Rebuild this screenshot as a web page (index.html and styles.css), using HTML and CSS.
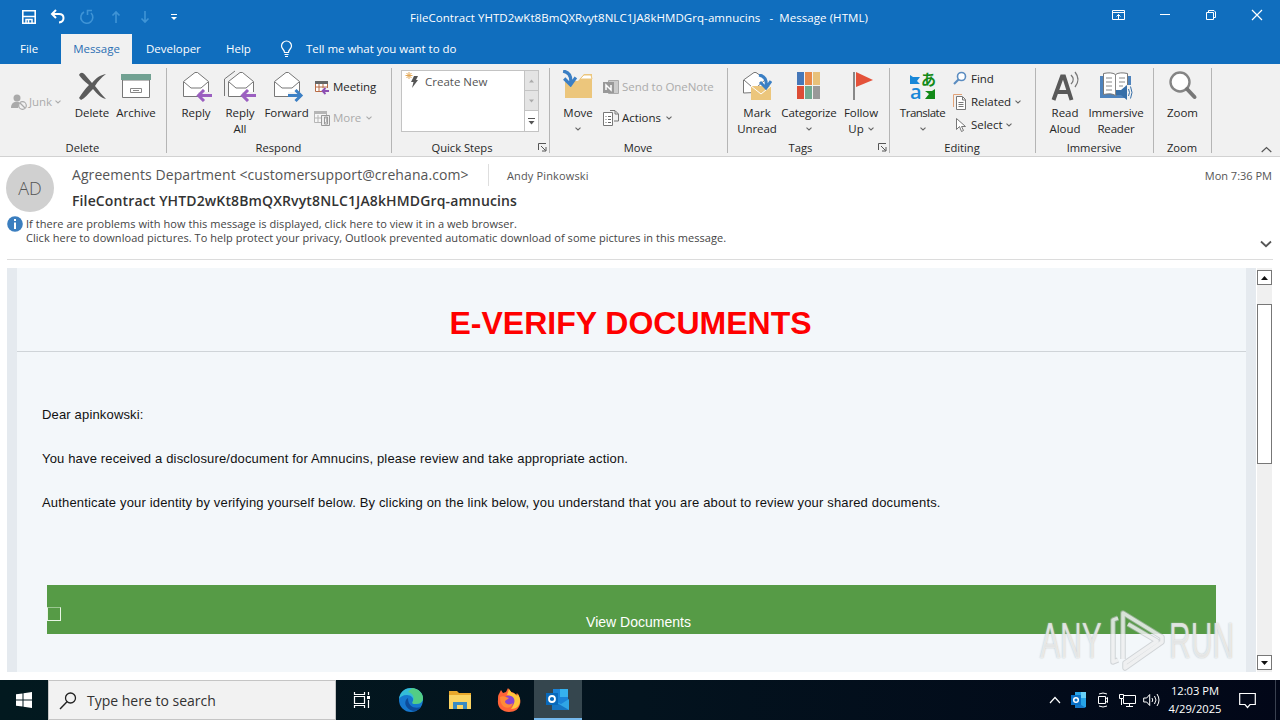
FILE: index.html
```html
<!DOCTYPE html>
<html lang="en">

<head>
    <meta charset="UTF-8">
    <meta name="viewport" content="width=device-width, initial-scale=1.0">
    <title>FileContract - Message (HTML)</title>
    <link rel="stylesheet" href="styles.css">
</head>

<body>

    <!-- Shared shapes -->
    <svg class="defs">
        <symbol id="chev" viewBox="0 0 6 4"><path d="M.5.7L3 3 5.500.7" fill="none" stroke="currentColor" stroke-width="1.100"/></symbol>
        <symbol id="launch" viewBox="0 0 9 9"><path d="M.5 7V.5H8M3 3l4.500 4.500M8 4v4H4" fill="none" stroke="#555"/></symbol>
        <symbol id="envelope" viewBox="0 0 32 32"><path d="M3.500 11.500L15 2.500h2.500l11 9v15h-25z" fill="#fff" stroke="#777"/><path d="M4 12l7 6h10l7-6" fill="none" stroke="#777"/></symbol>
        <symbol id="arrow-left" viewBox="0 0 16 13"><path d="M8 1L2.500 6.500 8 12M3 6.500h13" fill="none" stroke="#9b5fc0" stroke-width="3"/></symbol>
        <symbol id="arrow-down" viewBox="0 0 14 16"><path d="M1 1c6 1 8 5 7 12M2 8l6 6 5-7" fill="none" stroke="#3b7fc4" stroke-width="3"/></symbol>
    </svg>

    <header class="titlebar">
        <div class="quick-access">
            <svg width="16" height="16" viewBox="0 0 16 16"><path d="M1.800 1.800h12.400v12.400H1.800z" fill="none" stroke="#fff" stroke-width="1.600"/><path d="M2 7.500h12M5 14v-3.500h6V14M7.500 11v3" fill="none" stroke="#fff" stroke-width="1.500"/></svg>
            <svg width="16" height="16" viewBox="0 0 16 16"><path d="M6 1L2 5l4 4M2.500 5H9c6 0 6 8 0 8.500" fill="none" stroke="#fff" stroke-width="2"/></svg>
            <svg class="dim" width="16" height="16" viewBox="0 0 16 16"><path d="M5 3a6 6 0 1 0 7 1M8.500 6V1.500H13" fill="none" stroke="currentColor" stroke-width="1.600"/></svg>
            <svg class="dim" width="16" height="16" viewBox="0 0 16 16"><path d="M8 14V3M4.500 6.500L8 3l3.500 3.500" fill="none" stroke="currentColor" stroke-width="1.600"/></svg>
            <svg class="dim" width="16" height="16" viewBox="0 0 16 16"><path d="M8 2v11M4.500 9.500L8 13l3.500-3.500" fill="none" stroke="currentColor" stroke-width="1.600"/></svg>
            <svg width="16" height="16" viewBox="0 0 16 16"><path d="M5 5.500h6" stroke="#fff"/><path d="M5 8h6l-3 3z" fill="#fff"/></svg>
        </div>
        <div class="window-title">FileContract YHTD2wKt8BmQXRvyt8NLC1JA8kHMDGrq-amnucins &nbsp; - &nbsp;Message (HTML)</div>
        <div class="window-buttons">
            <svg width="14" height="12" viewBox="0 0 14 12"><path d="M.5 1.500h12v9H.5zM.5 3.500h12M6.500 10V5.500M4.500 7.500l2-2 2 2" fill="none" stroke="#fff"/></svg>
            <svg width="12" height="12" viewBox="0 0 12 12"><path d="M1 5.500h10" stroke="#fff"/></svg>
            <svg width="12" height="12" viewBox="0 0 12 12"><path d="M1.500 3.500h7v7h-7zM3.500 3V1.500H9L10.500 3v5.500H9" fill="none" stroke="#fff"/></svg>
            <svg width="12" height="12" viewBox="0 0 12 12"><path d="M1 1l10 10M11 1L1 11" stroke="#fff" stroke-width="1.200"/></svg>
        </div>
    </header>

    <nav class="tabs">
        <span class="tab tab-file">File</span>
        <span class="tab tab-active">Message</span>
        <span class="tab tab-dev">Developer</span>
        <span class="tab tab-help">Help</span>
        <svg class="bulb" width="14" height="18" viewBox="0 0 14 18"><path d="M4.500 12.500c0-3-3-3.500-3-6.500a5 5 0 0 1 10 0c0 3-3 3.500-3 6.500zM4.500 14.500h4M5 16.500h3" fill="none" stroke="#fff" stroke-width="1.200"/></svg>
        <span class="tell-me">Tell me what you want to do</span>
    </nav>

    <section class="ribbon">
        <div class="group group-delete">
            <div class="group-body">
                <div class="small junk disabled">
                    <svg width="17" height="17" viewBox="0 0 17 17"><circle cx="6" cy="4" r="3.500" fill="#aaa"/><path d="M0 14c0-7 7-7 9-5l-2 5z" fill="#aaa"/><circle cx="11.500" cy="11.500" r="3.800" fill="#f1f1f1" stroke="#aaa" stroke-width="1.200"/><path d="M9 9l5 5" stroke="#aaa" stroke-width="1.200"/></svg>
                    <span>Junk</span><svg class="chev"><use href="#chev"/></svg>
                </div>
                <div class="big">
                    <svg width="32" height="32" viewBox="0 0 32 32"><path d="M3 5C5 1 8 3 10 6l6 7c4-5 8-8 14-9-5 4-8 7-11 12 4 5 7 9 11 13-5-1-9-5-13-10C12 24 9 28 5 30l-2-2c3-5 6-9 10-13C8 11 5 8 3 5z" fill="#5b5b5b"/></svg>
                    <span>Delete</span>
                </div>
                <div class="big">
                    <svg width="32" height="32" viewBox="0 0 32 32"><path d="M2.500 10h27v17.500h-27z" fill="#fff" stroke="#777"/><path d="M1 4h30v6H1z" fill="#71a192"/><path d="M10.500 18.500h11v4h-11zM13 20.500h6" fill="none" stroke="#888"/></svg>
                    <span>Archive</span>
                </div>
            </div>
            <div class="group-name">Delete</div>
        </div>

        <div class="group group-respond">
            <div class="group-body">
                <div class="big">
                    <svg width="32" height="32" viewBox="0 0 32 32"><use href="#envelope" width="32" height="32"/><path d="M18 22h14v9H18z" fill="#f1f1f1"/><use href="#arrow-left" x="16" y="19" width="16" height="13"/></svg>
                    <span>Reply</span>
                </div>
                <div class="big">
                    <svg width="32" height="32" viewBox="0 0 32 32"><path d="M.5 26V9L11 1" fill="none" stroke="#777"/><use href="#envelope" x="1" width="32" height="32"/><path d="M18 22h14v9H18z" fill="#f1f1f1"/><use href="#arrow-left" x="16" y="19" width="16" height="13"/></svg>
                    <span>Reply<br>All</span>
                </div>
                <div class="big big-forward">
                    <svg width="32" height="32" viewBox="0 0 32 32"><use href="#envelope" width="32" height="32"/><path d="M17 22h14v9H17z" fill="#f1f1f1"/><path d="M17 25.500h13M24.500 20l5.500 5.500-5.500 5.500" fill="none" stroke="#3b7fc4" stroke-width="3"/></svg>
                    <span>Forward</span>
                </div>
                <div class="stack stack-two">
                    <div class="small">
                        <svg width="16" height="16" viewBox="0 0 16 16"><path d="M1.500 2.500h12v10h-12zM5 5v7M9 5v7M2 8h11" fill="#fff" stroke="#b86b45"/><path d="M1 2h13v3H1z" fill="#666"/><path d="M8 9h8v7H8z" fill="#f1f1f1"/><path d="M11.500 9L8.500 12l3 3M9 12h6" fill="none" stroke="#8d4fb3" stroke-width="1.800"/></svg>
                        <span>Meeting</span>
                    </div>
                    <div class="small disabled">
                        <svg width="16" height="16" viewBox="0 0 16 16"><path d="M.5 2.500h12v10H.5zM4 5v7M8 5v7M1 8h11" fill="#f6f6f6" stroke="#b5b5b5"/><path d="M0 1h13v3H0z" fill="#b5b5b5"/><path d="M7.500 5.500h8v10h-8zM10.500 7v7h3V7z" fill="#eee" stroke="#999"/></svg>
                        <span>More</span><svg class="chev"><use href="#chev"/></svg>
                    </div>
                </div>
            </div>
            <div class="group-name">Respond</div>
        </div>

        <div class="group group-quick">
            <div class="group-body">
                <div class="gallery">
                    <div class="gallery-item">
                        <svg width="16" height="16" viewBox="0 0 16 16"><path d="M9 4h4l-2 4h2l-6 8 1.500-6H6z" fill="#555"/><path d="M4 0v7M.5 3.500h7M1.500 1l5 5M6.500 1l-5 5" stroke="#e3a857"/></svg>
                        <span>Create New</span>
                    </div>
                    <div class="gallery-scroll">
                        <span><svg width="7" height="4" viewBox="0 0 7 4"><path d="M1 3.500l2.500-3 2.500 3z" fill="#aaa"/></svg></span>
                        <span><svg width="7" height="4" viewBox="0 0 7 4"><path d="M1 .5l2.500 3 2.500-3z" fill="#aaa"/></svg></span>
                        <span class="more"><svg width="7" height="7" viewBox="0 0 7 7"><path d="M0 .5h7" stroke="#555"/><path d="M.5 3h6l-3 3.500z" fill="#555"/></svg></span>
                    </div>
                </div>
            </div>
            <div class="group-name">Quick Steps</div>
            <svg class="launcher"><use href="#launch"/></svg>
        </div>

        <div class="group group-move">
            <div class="group-body">
                <div class="big">
                    <svg width="32" height="32" viewBox="0 0 32 32"><path d="M3 11h13l6-7h8v24H3z" fill="#ecc67c"/><path d="M18 9l4-4h7l1 4z" fill="#fff" stroke="#ecc67c"/><use href="#arrow-down" y="0" width="15" height="17"/></svg>
                    <span>Move</span><svg class="chev"><use href="#chev"/></svg>
                </div>
                <div class="stack stack-two">
                    <div class="small disabled">
                        <svg width="16" height="16" viewBox="0 0 16 16"><path d="M5.500 1.500h10v13h-10z" fill="#ccc" stroke="#aaa"/><path d="M0 3h11v11H0z" fill="#999"/><path d="M3 11V6l5 5V6" fill="none" stroke="#fff" stroke-width="1.500"/></svg>
                        <span>Send to OneNote</span>
                    </div>
                    <div class="small">
                        <svg width="16" height="16" viewBox="0 0 16 16"><path d="M.5 2.500h9v13h-9z" fill="#fff" stroke="#777"/><path d="M2.500 6.500h1M5 6.500h3M2.500 9.500h1M5 9.500h3M2.500 12.500h1M5 12.500h3" stroke="#666"/><path d="M7 .5h5L15.500 4v7H11M12 1v3h3" fill="none" stroke="#777"/></svg>
                        <span>Actions</span><svg class="chev"><use href="#chev"/></svg>
                    </div>
                </div>
            </div>
            <div class="group-name">Move</div>
        </div>

        <div class="group group-tags">
            <div class="group-body">
                <div class="big">
                    <svg width="32" height="32" viewBox="0 0 32 32"><path d="M2.500 23V10L13 2.500h2l10 7V22z" fill="#fff" stroke="#777"/><path d="M3 10l8 7h5l8-7" fill="none" stroke="#777"/><path d="M10 16h20v14H10z" fill="#ecc67c"/><path d="M10 16l10 8 10-8" fill="none" stroke="#fff"/><use href="#arrow-down" x="17" y="4" width="14" height="16"/></svg>
                    <span>Mark<br>Unread</span>
                </div>
                <div class="big categorize">
                    <svg width="32" height="32" viewBox="0 0 32 32"><path d="M4 2h7v13H4z" fill="#4577b8"/><path d="M12 2h7v13h-7z" fill="#e7894a"/><path d="M20 2h7v13h-7z" fill="#e8c17a"/><path d="M4 16h7v13H4z" fill="#dc4d36"/><path d="M12 16h7v13h-7z" fill="#71a990"/><path d="M20 16h7v13h-7z" fill="#999"/></svg>
                    <span>Categorize</span><svg class="chev"><use href="#chev"/></svg>
                </div>
                <div class="big">
                    <svg width="32" height="32" viewBox="0 0 32 32"><path d="M9 2v28" stroke="#888" stroke-width="2"/><path d="M11 2l17 8-17 7z" fill="#e4523a"/></svg>
                    <span>Follow<br>Up <svg class="chev"><use href="#chev"/></svg></span>
                </div>
            </div>
            <div class="group-name">Tags</div>
            <svg class="launcher"><use href="#launch"/></svg>
        </div>

        <div class="group group-editing">
            <div class="group-body">
                <div class="big translate">
                    <svg width="32" height="32" viewBox="0 0 32 32"><path d="M3 5l3 2h7l-3 4 3 3H3z" fill="#1787d8"/><path d="M28 29V19l-3 2h-7l4 3-4 5z" fill="#138a18"/><text class="glyph-a" x="3" y="29">a</text><text class="glyph-jp" x="14" y="15">あ</text></svg>
                    <span>Translate</span><svg class="chev"><use href="#chev"/></svg>
                </div>
                <div class="stack stack-three">
                    <div class="small">
                        <svg width="14" height="16" viewBox="0 0 14 16"><circle cx="8.500" cy="5.500" r="4" fill="#fff" stroke="#5b8cc0" stroke-width="1.600"/><path d="M5.500 8.500L1 13" stroke="#5b8cc0" stroke-width="2.200"/></svg>
                        <span>Find</span>
                    </div>
                    <div class="small">
                        <svg width="14" height="16" viewBox="0 0 14 16"><path d="M.5 13V.5H9" fill="none" stroke="#e3a378"/><path d="M3.500 2.500h6l3 3v10h-9zM9.500 3v3h3M5.500 8.500h5M5.500 10.500h5M5.500 12.500h5" fill="#fff" stroke="#777"/></svg>
                        <span>Related</span><svg class="chev"><use href="#chev"/></svg>
                    </div>
                    <div class="small">
                        <svg width="14" height="16" viewBox="0 0 14 16"><path d="M3.500 1.500v11l3-3 2 5 2-1-2-4h4z" fill="#fff" stroke="#777"/></svg>
                        <span>Select</span><svg class="chev"><use href="#chev"/></svg>
                    </div>
                </div>
            </div>
            <div class="group-name">Editing</div>
        </div>

        <div class="group group-immersive">
            <div class="group-body">
                <div class="big">
                    <svg width="32" height="32" viewBox="0 0 32 32"><path d="M4.500 30L13 6.500h2L22.500 30M8 22h11" fill="none" stroke="#595959" stroke-width="4"/><path d="M22 5c3 3 3 6 0 9M26 2c4 5 4 10 0 15" fill="none" stroke="#777" stroke-width="1.300"/></svg>
                    <span>Read<br>Aloud</span>
                </div>
                <div class="big big-reader">
                    <svg width="32" height="32" viewBox="0 0 32 32"><path d="M0 6h31v22H0z" fill="#4e83bd"/><path d="M3.500 3.500c5-1 9-1 12 1 3-2 7-2 12-1v21c-5-1-9-1-12 1-3-2-7-2-12-1z" fill="#fff" stroke="#777"/><path d="M15.500 5v20M6 8h6M6 12h6M6 16h6M6 20h6M19 8h6M19 12h6M19 16h4" fill="none" stroke="#888"/><path d="M25 15h7v16h-7z" fill="#f1f1f1"/><path d="M16 20h5l6-5v15l-6-5h-5z" fill="#376fa8"/><path d="M28.500 19q2 3.500 0 7M30.500 16.500q3 6 0 12" fill="none" stroke="#376fa8"/></svg>
                    <span>Immersive<br>Reader</span>
                </div>
            </div>
            <div class="group-name">Immersive</div>
        </div>

        <div class="group group-zoom">
            <div class="group-body">
                <div class="big">
                    <svg width="32" height="32" viewBox="0 0 32 32"><circle cx="13" cy="12" r="9.500" fill="#fff" stroke="#858585" stroke-width="2.400"/><path d="M20 19l7.500 8" stroke="#777" stroke-width="4" stroke-linecap="round"/></svg>
                    <span>Zoom</span>
                </div>
            </div>
            <div class="group-name">Zoom</div>
        </div>
        <svg class="collapse" width="11" height="7" viewBox="0 0 11 7"><path d="M.7 6l4.800-4.500L10.300 6" fill="none" stroke="#555" stroke-width="1.200"/></svg>
    </section>

    <section class="mail-header">
        <div class="sender-row">
            <div class="avatar">AD</div>
            <div class="sender-info">
                <div class="from-line">
                    <span class="from">Agreements Department &lt;customersupport@crehana.com&gt;</span>
                    <span class="to">Andy Pinkowski</span>
                    <span class="date">Mon 7:36 PM</span>
                </div>
                <div class="subject">FileContract YHTD2wKt8BmQXRvyt8NLC1JA8kHMDGrq-amnucins</div>
            </div>
        </div>
        <div class="info-bar">
            <svg width="16" height="16" viewBox="0 0 16 16"><circle cx="8" cy="8" r="7.800" fill="#3b7ebf"/><path d="M8 3v2M8 6.500V13" stroke="#fff" stroke-width="2"/></svg>
            <div class="info-text">
                <div class="info-first">If there are problems with how this message is displayed, click here to view it in a web browser.</div>
                <div class="info-second">Click here to download pictures. To help protect your privacy, Outlook prevented automatic download of some pictures in this message.</div>
            </div>
            <svg class="expand" width="12" height="8" viewBox="0 0 12 8"><path d="M1 1.500l5 4.700 5-4.700" fill="none" stroke="#555" stroke-width="1.800"/></svg>
        </div>
    </section>

    <main class="reading-pane">
        <div class="mail-backdrop">
            <article class="mail">
                <h1>E-VERIFY DOCUMENTS</h1>
                <div class="mail-text">
                    <p>Dear apinkowski:</p>
                    <p>You have received a disclosure/document for Amnucins, please review and take appropriate action.</p>
                    <p>Authenticate your identity by verifying yourself below. By clicking on the link below, you understand that you are about to review your shared documents.</p>
                </div>
                <div class="view-button">
                    <span class="missing-image"></span>
                    <span class="view-label">View Documents</span>
                </div>
            </article>
        </div>
        <div class="scrollbar">
            <div class="scroll-button"><svg width="7" height="4" viewBox="0 0 7 4"><path d="M0 4l3.500-4L7 4z" fill="#111"/></svg></div>
            <div class="thumb"></div>
            <div class="scroll-button"><svg width="7" height="4" viewBox="0 0 7 4"><path d="M0 0l3.500 4L7 0z" fill="#111"/></svg></div>
        </div>
    </main>

    <div class="watermark">
        <span class="mark">ANY</span>
        <svg width="56" height="62" viewBox="0 0 56 62">
            <g fill="none" stroke-linejoin="round">
                <path d="M8 8l-5 2v42l5-2M13 49V3l39 24v5L15 58v-5l32-22-29-17" stroke="#b9bdbf" stroke-opacity=".6" stroke-width="5.500"/>
                <path d="M8 8l-5 2v42l5-2M13 49V3l39 24v5L15 58v-5l32-22-29-17" stroke="#fff" stroke-opacity=".65" stroke-width="3.500"/>
            </g>
        </svg>
        <span class="mark">RUN</span>
    </div>

    <footer class="taskbar">
        <div class="start"><svg width="16" height="16" viewBox="0 0 16 16"><path d="M0 2.300l6.500-.9v6.100H0zM7.500 1.200L16 0v7.500H7.500zM0 8.500h6.500v6.100L0 13.700zM7.500 8.500H16V16l-8.500-1.200z" fill="#fff"/></svg></div>
        <div class="search">
            <svg width="18" height="18" viewBox="0 0 18 18"><circle cx="11.500" cy="6" r="5" fill="none" stroke="#222" stroke-width="1.300"/><path d="M8 9.700L1 17" stroke="#222" stroke-width="1.400"/></svg>
            <span>Type here to search</span>
        </div>
        <div class="app"><svg width="18" height="18" viewBox="0 0 18 18"><path d="M1.500 1v2.500h10V1M1.500 17v-2.500h10V17M1.500 5.500h10v7h-10zM15.500 1v3M15.500 9v8" fill="none" stroke="#fff" stroke-width="1.200"/><path d="M14 5h3v3h-3z" fill="#fff"/></svg></div>
        <div class="app"><svg width="24" height="24" viewBox="0 0 24 24"><circle cx="12" cy="12" r="12" fill="#1678cf"/><path d="M0 11C1 3 7 0 12 0c8 0 12 6 12 10 0 5-4 6-8 6-3 0-3-1-2-3 1-3-2-6-6-6-4 0-7 2-8 4z" fill="#34bcd8"/><path d="M13 0c7 .5 11 6 11 10 0 5-4 6-8 6-3 0-3-1-2-3 2-3 0-8-5-9z" fill="#5ed36a" opacity=".75"/><path d="M9 10c-5 3-3 11 5 13 4 0 7-2 8-4-6 2-13 0-13-9z" fill="#0d4c9b"/></svg></div>
        <div class="app"><svg width="22" height="20" viewBox="0 0 22 20"><path d="M0 1h8l2 2h12v16H0z" fill="#e9a82b"/><path d="M0 5h22v14H0z" fill="#fbd463"/><path d="M4 19v-7h14v7h-4v-4H8v4z" fill="#398ac3"/></svg></div>
        <div class="app"><svg width="24" height="24" viewBox="0 0 24 24"><path d="M2 6l2-4 2 3 3-1 2-4 3 4c3 0 4 2 5 3l1-2c3 4 4 7 3 11-1 5-5 8-11 8C5 24 0 19 1 12c0-3 0-5 1-6z" fill="#ff6438"/><path d="M12 1l3 4c3 0 4 2 5 3l1-2c2 4 3 7 1 11-2 3-5 4-8 4 6-7 1-13-4-14z" fill="#ffc63b"/><circle cx="12" cy="13" r="5.500" fill="#8a43d2"/><path d="M3 9c3-2 6 0 9 1-2 2-4 2-4 4 1 3 6 3 8 1-1 5-7 6-10 3-2-2-3-5-3-9z" fill="#ff8b37"/></svg></div>
        <div class="app app-active"><svg width="24" height="22" viewBox="0 0 24 22"><path d="M7 1h15v15H7z" fill="#1a83d8"/><path d="M14 1h8v8h-8z" fill="#35b1ee"/><path d="M6 12l9 4 8-5v11H6z" fill="#2fa5e6"/><path d="M6 12l17 10H6z" fill="#1676c4"/><path d="M0 5h12v12H0z" fill="#0869bb"/><circle cx="6" cy="11" r="3" fill="none" stroke="#fff" stroke-width="1.800"/></svg></div>
        <div class="tray">
            <svg width="12" height="8" viewBox="0 0 12 8"><path d="M1 7l5-5.500L11 7" fill="none" stroke="#fff" stroke-width="1.200"/></svg>
            <svg width="16" height="16" viewBox="0 0 16 16"><path d="M4 0h11v15H4z" fill="#27a4e7"/><path d="M10 0h5v6h-5z" fill="#68d0f7"/><path d="M4 9l11 7H4z" fill="#1478c7"/><path d="M0 3h10v10H0z" fill="#0870c6"/><circle cx="5" cy="8" r="2.300" fill="none" stroke="#fff" stroke-width="1.500"/></svg>
            <svg width="12" height="16" viewBox="0 0 12 16"><path d="M1.500 4.500h7v7h-7zM8.500 7l2-1.500v5L8.500 9M2 2q4-2 8 0M2 14q4 2 8 0" fill="none" stroke="#fff"/></svg>
            <svg width="17" height="14" viewBox="0 0 17 14"><path d="M5 2.500h11.500v8H4.500V6M10.500 11v2.500M7 13.500h7M.5 1.500h4v4h-4zM2.500 6v6" fill="none" stroke="#fff"/></svg>
            <svg class="sound" width="17" height="14" viewBox="0 0 17 14"><path d="M.7 5h3l3-3.500v11l-3-3.500h-3zM9 5q1.500 2 0 4M11.500 3q3 4 0 8M14 1q4 6 0 12" fill="none" stroke="#fff"/></svg>
            <div class="clock"><span>12:03 PM</span><span>4/29/2025</span></div>
            <svg class="notifications" width="17" height="17" viewBox="0 0 17 17"><path d="M.7 1.500h15.600v11H11L8.500 15.500 6 12.500H.7z" fill="none" stroke="#fff" stroke-width="1.200"/></svg>
        </div>
    </footer>

</body>

</html>
```
FILE: styles.css
```css
* {
    box-sizing: border-box;
}

body {
    width: 1280px;
    height: 720px;
    margin: 0;
    overflow: hidden;
    display: flex;
    flex-direction: column;
    background-color: white;
    color: #262626;
    font-family: "Open Sans", "Noto Sans", sans-serif;
    font-size: 12px;
    line-height: 16px;
    white-space: nowrap;
}

svg {
    flex: none;
    overflow: visible;
}

.defs {
    position: absolute;
    width: 0;
    height: 0;
}

/* Title bar and tabs */
.titlebar {
    height: 34px;
    background-color: #106ebe;
    color: white;
    display: flex;
}

.quick-access {
    width: 410px;
    padding: 9px 0 0 21px;
    display: flex;
    gap: 13px;
}

.dim {
    color: #3f94d6;
}

.window-title {
    width: 702px;
    padding-top: 10px;
    font-size: 11.500px;
    letter-spacing: 0.055px;
}

.window-buttons {
    display: flex;
    gap: 34px;
    padding-top: 9px;
}

.window-buttons svg:first-child {
    margin-right: -1px;
}

.tabs {
    height: 30px;
    background-color: #106ebe;
    color: white;
    display: flex;
    font-size: 11.500px;
    line-height: 30px;
    letter-spacing: -0.03px;
}

.tab-file {
    width: 61px;
    padding-left: 20px;
}

.tab-active {
    width: 71px;
    background-color: #f1f1f1;
    color: #2b6fb3;
    text-align: center;
}

.tab-dev {
    width: 94px;
    padding-left: 14px;
}

.tab-help {
    width: 54px;
}

.bulb {
    margin-top: 6px;
}

.tell-me {
    margin-left: 12px;
}

/* Ribbon */
.ribbon {
    position: relative;
    height: 93px;
    background-color: #f1f1f1;
    border-bottom: 1px solid #d2d2d2;
    display: flex;
    font-size: 11.500px;
}

.group {
    position: relative;
    height: 92px;
}

.group::after {
    content: "";
    position: absolute;
    right: 0;
    top: 4px;
    height: 85px;
    border-right: 1px solid #b5b5b5;
}

.group-body {
    display: flex;
    height: 76px;
    padding-top: 6px;
}

.group-name {
    padding-right: 2px;
    text-align: center;
    line-height: 16px;
    font-size: 11.200px;
}

.group-delete {
    width: 167px;
}

.group-respond {
    width: 225px;
}

.group-quick {
    width: 158px;
}

.group-quick .group-name {
    padding-right: 18px;
}

.group-move {
    width: 178px;
}

.group-tags {
    width: 162px;
}

.group-tags .group-name {
    padding-right: 17px;
}

.group-editing {
    width: 146px;
}

.group-immersive {
    width: 118px;
}

.group-zoom {
    width: 58px;
}

.big {
    display: flex;
    flex-direction: column;
    align-items: center;
    text-align: center;
    width: 44px;
    letter-spacing: -0.05px;
}

.big > span {
    margin-top: 3px;
}

.group-respond .group-body {
    padding-left: 7px;
}

.group-respond .big-forward {
    width: 49px;
}

.group-move .big {
    width: 56px;
}

.group-tags .group-body {
    padding-left: 3px;
}

.group-tags .big {
    width: 52px;
}

.group-tags .categorize {
    letter-spacing: -0.15px;
}

.group-editing .big {
    width: 65px;
}

.group-editing .translate {
    letter-spacing: -0.5px;
}

.group-immersive .group-body {
    padding-left: 7px;
}

.group-immersive .big-reader {
    width: 58px;
    letter-spacing: -0.15px;
}

.group-zoom .big {
    width: 57px;
}

.chev {
    width: 6px;
    height: 4px;
    color: #666;
}

.big > .chev {
    margin-top: 6px;
}

.big span .chev {
    margin: 0 0 2px 1px;
}

.small {
    display: flex;
    align-items: center;
    height: 16px;
    gap: 3px;
    letter-spacing: -0.05px;
}

.small .chev {
    margin-left: 2px;
}

.disabled,
.disabled .chev {
    color: #ababab;
}

.junk {
    width: 59px;
    margin: 24px 0 0 11px;
    gap: 1px;
}

.stack {
    display: flex;
    flex-direction: column;
}

.stack-two {
    gap: 15px;
    padding: 9px 0 0 3px;
}

.group-move .stack-two {
    padding-left: 0;
    margin-left: -3px;
}

.stack-three {
    gap: 7px;
    padding-top: 1px;
    margin-left: -2px;
}

.stack-three .small {
    gap: 4px;
}

.stack-three .chev {
    margin-left: 0;
}

.launcher {
    position: absolute;
    right: 3px;
    bottom: 4px;
    width: 9px;
    height: 9px;
}

.collapse {
    position: absolute;
    right: 8px;
    bottom: 3px;
}

.gallery {
    display: flex;
    width: 138px;
    height: 62px;
    margin-left: 9px;
    border: 1px solid #c3c3c3;
    background-color: white;
}

.gallery-item {
    flex: 1;
    display: flex;
    gap: 4px;
    padding: 1px 3px;
    color: #555;
}

.gallery-item span {
    padding-top: 2px;
}

.gallery-scroll {
    width: 14px;
    display: grid;
    grid-template-rows: 1fr 1fr 1fr;
    border-left: 1px solid #c3c3c3;
}

.gallery-scroll span {
    display: flex;
    align-items: center;
    justify-content: center;
    background-color: #e4e4e4;
    border-bottom: 1px solid #c3c3c3;
}

.gallery-scroll .more {
    background-color: white;
    border-bottom: 0;
}

.glyph-a {
    font-family: "Open Sans", sans-serif;
    font-size: 20px;
    font-weight: 600;
    fill: #1787d8;
}

.glyph-jp {
    font-family: "Noto Sans CJK JP", sans-serif;
    font-size: 15px;
    font-weight: bold;
    fill: #138a18;
}

/* Sender details */
.mail-header {
    height: 103px;
    margin: 0 7px;
    border-bottom: 1px solid #dcdcdc;
}

.sender-row {
    display: flex;
    height: 59px;
    padding-top: 7px;
    margin-left: -1px;
}

.avatar {
    width: 48px;
    height: 48px;
    border-radius: 50%;
    background-color: #d0d0d0;
    color: #555;
    font-size: 18px;
    line-height: 49px;
    text-align: center;
    font-weight: 300;
}

.sender-info {
    flex: 1;
    padding-left: 18px;
}

.from-line {
    display: flex;
    height: 22px;
    line-height: 22px;
    color: #555;
}

.from {
    width: 417px;
    border-right: 1px solid #dedede;
    font-size: 14px;
    letter-spacing: 0.08px;
}

.to {
    flex: 1;
    padding-left: 18px;
    padding-top: 1px;
    font-size: 11px;
    letter-spacing: 0.14px;
}

.date {
    padding: 1px 1px 0 0;
    font-size: 11px;
}

.subject {
    font-size: 14px;
    font-weight: 600;
    line-height: 30px;
    letter-spacing: 0.13px;
    color: #333;
}

.info-bar {
    position: relative;
    display: flex;
    gap: 3px;
    font-size: 11px;
    line-height: 14px;
    letter-spacing: 0.045px;
    color: #444;
}

.info-text {
    padding-top: 1px;
}

.expand {
    position: absolute;
    right: 1px;
    bottom: -3px;
}

/* Message content */
.reading-pane {
    display: flex;
    height: 404px;
    margin: 8px 8px 8px 7px;
}

.mail-backdrop {
    width: 1249px;
    padding: 0 10px;
    background-color: #e5eaef;
}

.mail {
    height: 404px;
    background-color: #f3f7fa;
    font-family: "Liberation Sans", Arial, sans-serif;
    color: #111;
}

.mail h1 {
    height: 84px;
    margin: 0;
    padding: 36px 2px 0 0;
    border-bottom: 1px solid #cfd4d8;
    color: #ff0000;
    font-size: 32px;
    line-height: 38px;
    text-align: center;
}

.mail-text {
    height: 233px;
    padding: 55px 25px 0;
    font-size: 13px;
    letter-spacing: 0.163px;
}

.mail-text p {
    margin: 0 0 28px;
    line-height: 16px;
}

.view-button {
    display: flex;
    height: 49px;
    margin: 0 30px;
    background-color: #569b46;
    color: white;
    font-size: 14px;
}

.missing-image {
    width: 14px;
    height: 14px;
    margin-top: 22px;
    border: 1px solid #e8f5e4;
    border-top-color: #9bc791;
}

.view-label {
    flex: 1;
    padding-top: 29px;
    text-align: center;
}

.scrollbar {
    width: 15px;
    margin-left: 1px;
    padding: 2px 0;
    background-color: #f0f0f0;
    display: flex;
    flex-direction: column;
}

.scroll-button {
    display: flex;
    align-items: center;
    justify-content: center;
    height: 15px;
    border: 1px solid #777;
    background-color: white;
}

.thumb {
    height: 160px;
    margin: 19px 0 191px;
    border: 1px solid #777;
    background-color: white;
}

/* Overlay mark */
.watermark {
    position: absolute;
    left: 1040px;
    top: 610px;
    display: flex;
    align-items: center;
    height: 62px;
    width: 198px;
    gap: 3px;
    color: rgba(255, 255, 255, 0.65);
    font-family: "Liberation Sans", Arial, sans-serif;
    font-size: 50px;
    line-height: 62px;
    text-shadow: 0 0 2px #b5bab9;
}

.mark {
    transform: scaleX(0.6);
    transform-origin: left;
    width: 67px;
}

/* Taskbar */
.taskbar {
    display: flex;
    height: 40px;
    background: linear-gradient(90deg, #02191f, #03131e 50%, #020718);
    color: white;
}

.start,
.app {
    display: flex;
    width: 48px;
    height: 40px;
    align-items: center;
    justify-content: center;
}

.app {
    width: 49px;
}

.app-active {
    width: 48px;
    margin-left: 1px;
    background-color: #35464e;
    border-bottom: 2px solid #76b9ed;
}

.search {
    display: flex;
    align-items: center;
    width: 288px;
    gap: 10px;
    padding: 2px 0 0 10px;
    margin-right: 1px;
    border: 1px solid #c5c5c5;
    background-color: #f2f2f2;
    color: #333;
    font-size: 14px;
}

.tray {
    display: flex;
    align-items: center;
    width: 227px;
    gap: 10px;
    margin: 0 4px 0 auto;
    border-right: 1px solid #3a4150;
}

.sound {
    margin-left: -3px;
}

.clock {
    display: flex;
    flex-direction: column;
    width: 54px;
    margin-left: -2px;
    text-align: center;
    font-size: 11.200px;
    line-height: 18px;
}

.notifications {
    margin-left: 7px;
}
```
